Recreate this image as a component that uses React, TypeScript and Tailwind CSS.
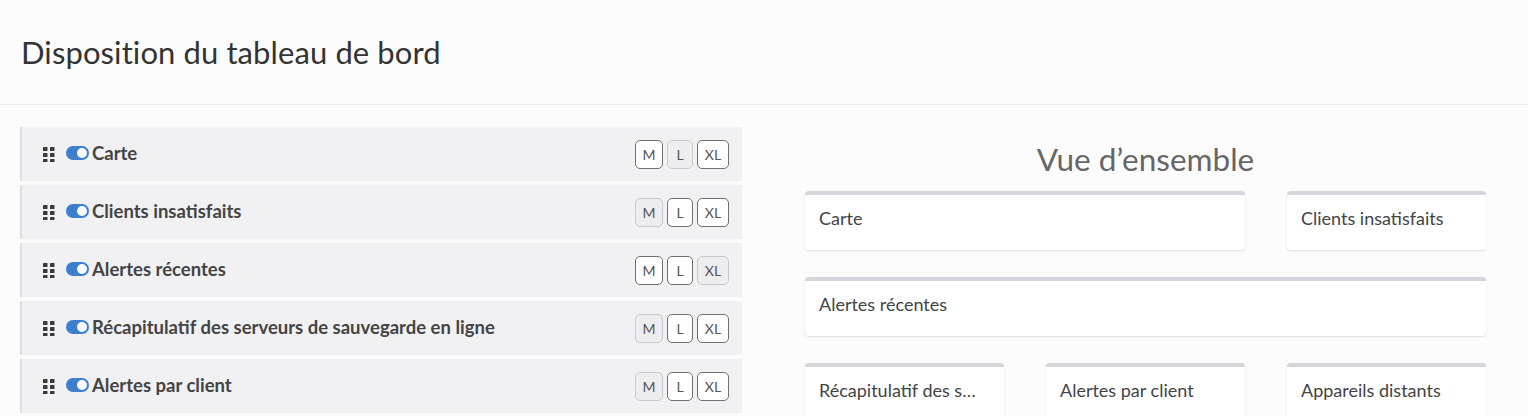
import { useState } from 'react';

type Size = 'M' | 'L' | 'XL';

const widgets: { label: string; size: Size }[] = [
  { label: 'Carte', size: 'L' },
  { label: 'Clients insatisfaits', size: 'M' },
  { label: 'Alertes récentes', size: 'XL' },
  { label: 'Récapitulatif des serveurs de sauvegarde en ligne', size: 'M' },
  { label: 'Alertes par client', size: 'M' },
];

const preview = [
  { label: 'Carte', span: 'col-span-2' },
  { label: 'Clients insatisfaits', span: 'col-span-1' },
  { label: 'Alertes récentes', span: 'col-span-3' },
  { label: 'Récapitulatif des s…', span: 'col-span-1' },
  { label: 'Alertes par client', span: 'col-span-1' },
  { label: 'Appareils distants', span: 'col-span-1' },
];

const sizeWidth: Record<Size, string> = { M: 'w-[28px]', L: 'w-[26px]', XL: 'w-[32px]' };

function Grip() {
  return (
    <svg width="12" height="16" viewBox="0 0 12 16" className="shrink-0">
      {[0, 6, 12].map((y) =>
        [0, 7].map((x) => <rect key={`${x}-${y}`} x={x} y={y + 1} width="4.5" height="4" rx="0.6" fill="#3a3a3a" />)
      )}
    </svg>
  );
}

function Toggle() {
  return (
    <span className="relative inline-block h-[14px] w-[23px] shrink-0 rounded-full bg-[#3d7fcf]">
      <span className="absolute right-[2px] top-[2px] h-[10px] w-[10px] rounded-full bg-white" />
    </span>
  );
}

function SizeButtons({ initial }: { initial: Size }) {
  const [size, setSize] = useState<Size>(initial);
  return (
    <div className="flex gap-[4px]">
      {(['M', 'L', 'XL'] as Size[]).map((s) => (
        <button
          key={s}
          onClick={() => setSize(s)}
          className={
            s === size
              ? `${sizeWidth[s]} flex h-[29px] items-center justify-center rounded-[5px] border border-[#c9c9cc] bg-[#ededef] text-[14px] text-[#555]`
              : `${sizeWidth[s]} flex h-[29px] items-center justify-center rounded-[5px] border border-[#707070] bg-white text-[14px] text-[#555]`
          }
        >
          {s}
        </button>
      ))}
    </div>
  );
}

export default function App() {
  return (
    <div className="min-h-screen bg-[#fcfcfc] font-['Lato',sans-serif] text-[#333]">
      <header className="flex h-[105px] items-center border-b border-[#eeeeee] px-[21px]">
        <h1 className="text-[31px] font-normal tracking-[0.1px] text-[#333]">Disposition du tableau de bord</h1>
      </header>

      <div className="flex gap-[63px] pl-[20px] pt-[22px]">
        <div className="flex w-[722px] flex-col gap-[4px]">
          {widgets.map((w) => (
            <div
              key={w.label}
              className="flex h-[54px] items-center border-l-2 border-[#dedee2] bg-[#f1f1f4] pl-[21px] pr-[13px]"
            >
              <Grip />
              <span className="ml-[11px]">
                <Toggle />
              </span>
              <span className="ml-[3px] flex-1 text-[18.5px] font-bold text-[#444]">{w.label}</span>
              <SizeButtons initial={w.size} />
            </div>
          ))}
        </div>

        <div className="w-[681px]">
          <h2 className="mt-[9px] text-center text-[31.5px] font-normal text-[#666]">Vue d’ensemble</h2>
          <div className="mt-[8px] grid grid-cols-3 gap-x-[42px] gap-y-[27px]">
            {preview.map((p) => (
              <div
                key={p.label}
                className={`${p.span} h-[59px] rounded-[4px] border-t-4 border-[#d5d5dc] bg-white px-[14px] pt-[10px] shadow-[0_1px_2px_rgba(0,0,0,0.12)]`}
              >
                <span className="text-[18px] text-[#444]">{p.label}</span>
              </div>
            ))}
          </div>
        </div>
      </div>
    </div>
  );
}
